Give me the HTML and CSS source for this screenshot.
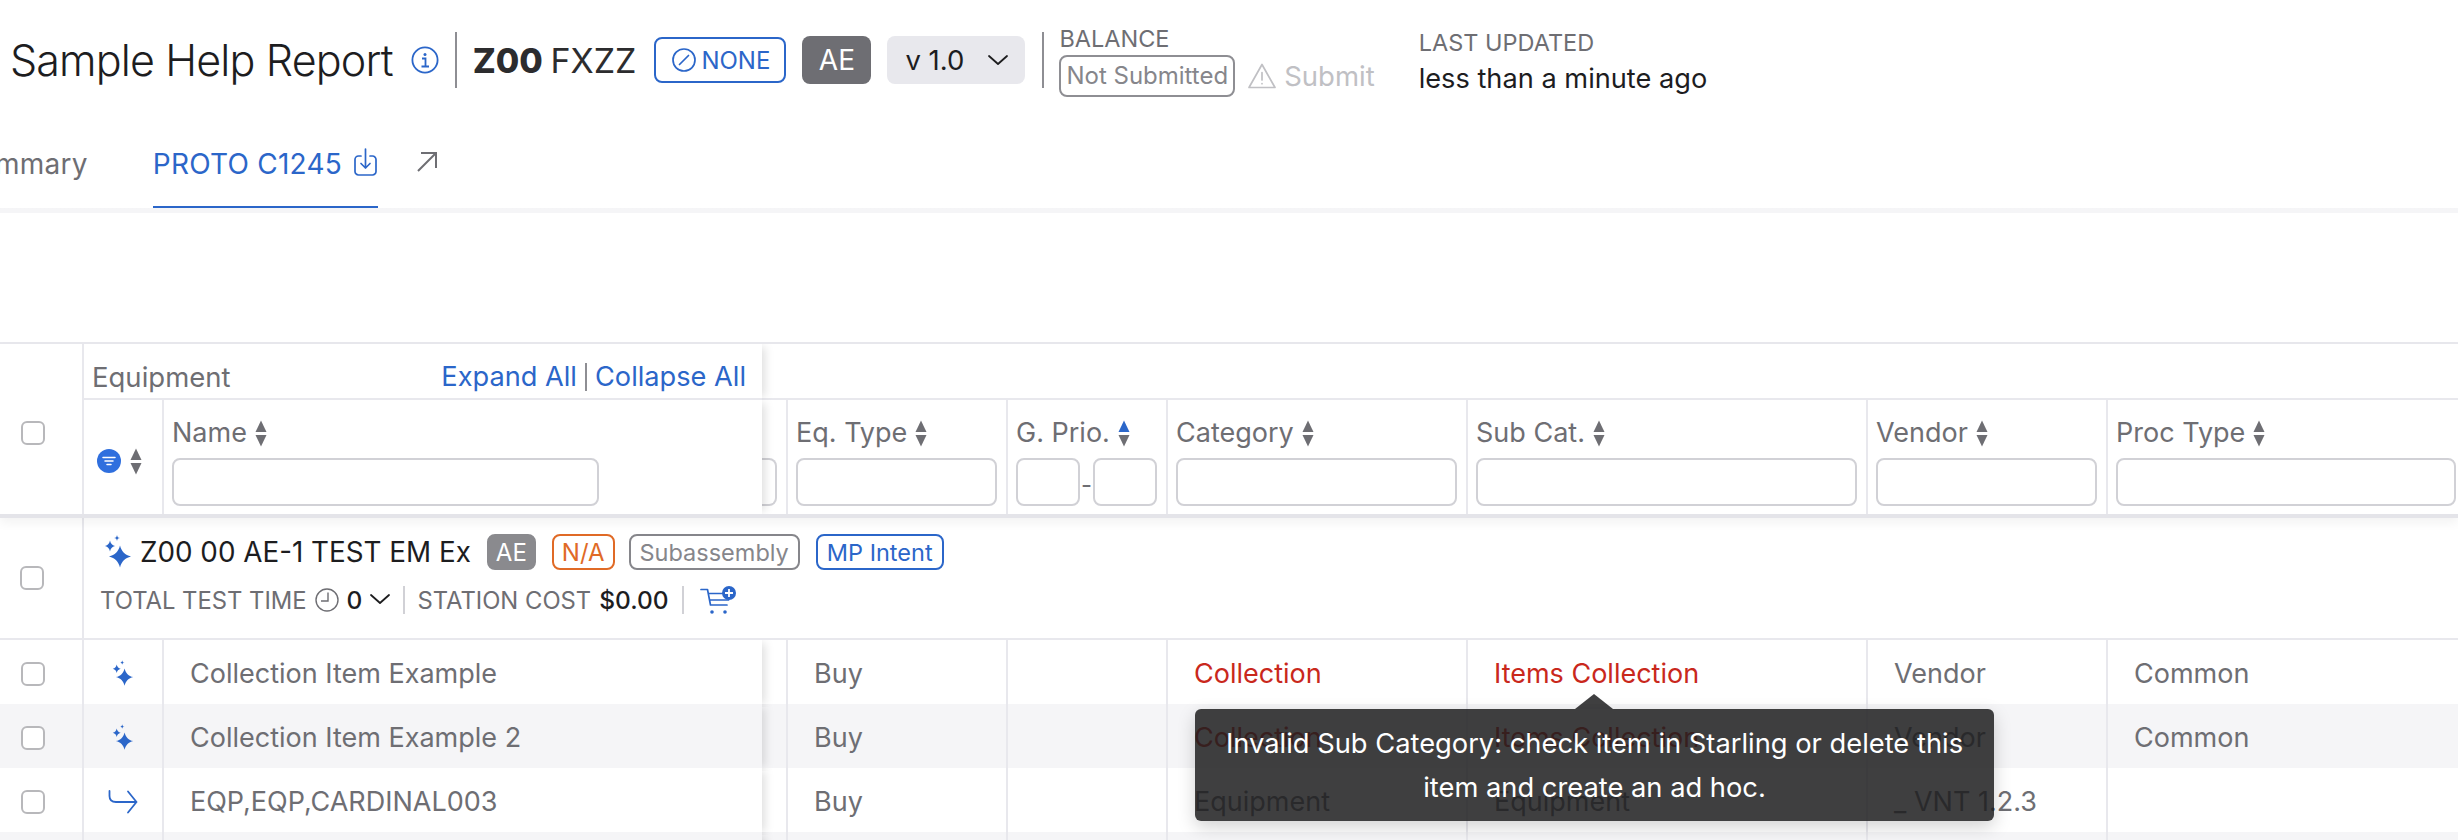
FILE: index.html
```html
<!DOCTYPE html>
<html lang="en">
<head>
<meta charset="utf-8">
<title>Sample Help Report</title>
<link rel="stylesheet" href="styles.css">
</head>
<body>
<svg class="defs" width="0" height="0" aria-hidden="true">
  <symbol id="i-spark" viewBox="0 0 28 34">
    <path fill="currentColor" d="M16 10.500C17.600 16.500 21 20 27 21.500C21 23 17.600 26.500 16 32.500C14.400 26.500 11 23 5 21.500C11 20 14.400 16.500 16 10.500Z"/>
    <path fill="currentColor" d="M6 5.500C6.600 8.500 8 10 11 11C8 12 6.600 13.500 6 16.500C5.400 13.500 4 12 1 11C4 10 5.400 8.500 6 5.500Z"/>
    <path fill="currentColor" d="M13 0C13.300 2 14 2.800 16 3C14 3.200 13.300 4 13 6C12.700 4 12 3.200 10 3C12 2.800 12.700 2 13 0Z"/>
  </symbol>
  <symbol id="i-sort" viewBox="0 0 12 27">
    <path fill="currentColor" d="M6 0.500L11.500 12H0.500Z"/>
    <path fill="currentColor" d="M0.500 15H11.500L6 26.500Z"/>
  </symbol>
  <symbol id="i-chev" viewBox="0 0 20 10">
    <path fill="none" stroke="currentColor" stroke-width="1.800" stroke-linecap="round" stroke-linejoin="round" d="M1 1L10 9L19 1"/>
  </symbol>
</svg>

<div class="page">
  <header class="topbar">
    <h1 class="title">Sample Help Report</h1>
    <svg class="icon-info" viewBox="0 0 28 28"><circle cx="14" cy="14" r="12.600" fill="none" stroke="currentColor" stroke-width="1.800"/><circle cx="14" cy="8.500" r="1.500" fill="currentColor"/><path fill="none" stroke="currentColor" stroke-width="1.800" d="M11 12.500H14.500V20.500M10.500 20.500H18"/></svg>
    <span class="vrule"></span>
    <span class="code"><b>Z00</b> FXZZ</span>
    <span class="badge-none">
      <svg class="icon-ban" viewBox="0 0 24 24"><circle cx="12" cy="12" r="11" fill="none" stroke="currentColor" stroke-width="1.700"/><path stroke="currentColor" stroke-width="1.700" stroke-linecap="round" d="M7.500 16.500L16.500 7.500"/></svg>
      NONE
    </span>
    <span class="badge-ae">AE</span>
    <span class="version">v 1.0<svg class="icon-chev"><use href="#i-chev"/></svg></span>
    <span class="vrule vrule-b"></span>
    <div class="balance">
      <span class="meta-label balance-label">BALANCE</span>
      <div class="balance-row">
        <span class="badge-status">Not Submitted</span>
        <span class="submit">
          <svg class="icon-warn" viewBox="0 0 28 26"><path fill="none" stroke="currentColor" stroke-width="1.700" stroke-linejoin="round" d="M14 1.500L27 24.500H1Z"/><path stroke="currentColor" stroke-width="1.700" stroke-linecap="round" d="M14 9.500V17M14 20.500V20.700"/></svg>
          Submit
        </span>
      </div>
    </div>
    <div class="updated">
      <span class="meta-label">LAST UPDATED</span>
      <span class="updated-value">less than a minute ago</span>
    </div>
  </header>

  <nav class="tabs">
    <span class="tab tab-clipped">Summary</span>
    <span class="tab tab-active">PROTO C1245
      <svg class="icon-export" viewBox="0 0 23 28"><path fill="none" stroke="currentColor" stroke-width="1.700" stroke-linecap="round" stroke-linejoin="round" d="M7 8H4.500A3.500 3.500 0 0 0 1 11.500V23.500A3.500 3.500 0 0 0 4.500 27H18.500A3.500 3.500 0 0 0 22 23.500V11.500A3.500 3.500 0 0 0 18.500 8H16M11.500 1V20M7 15.500L11.500 20L16 15.500"/></svg>
    </span>
    <svg class="icon-open" viewBox="0 0 20 20"><path fill="none" stroke="currentColor" stroke-width="2" d="M1 19L19 1M4 1H19V16"/></svg>
  </nav>

  <div class="spacer"></div>

  <section class="table">
    <div class="thead">
      <div class="th-check"><input class="check" type="checkbox"></div>
      <div class="th-band edge">
        <span class="band-label">Equipment</span>
        <span class="band-links"><a class="link">Expand All</a><span class="link-rule"></span><a class="link">Collapse All</a></span>
      </div>
      <div class="th-band-rest"></div>
      <div class="th th-icon">
        <svg class="icon-filter" viewBox="0 0 24 24"><circle cx="12" cy="12" r="12" fill="currentColor"/><path stroke="#fff" stroke-width="1.500" stroke-linecap="round" d="M6 8.500H18M8 12H16M10 15.500H14"/></svg>
        <svg class="icon-sort"><use href="#i-sort"/></svg>
      </div>
      <div class="th th-name edge">
        <span class="th-label">Name<svg class="icon-sort"><use href="#i-sort"/></svg></span>
        <input class="filter filter-name" type="text">
      </div>
      <div class="th-gap"><input class="filter filter-remnant" type="text"></div>
      <div class="th">
        <span class="th-label">Eq. Type<svg class="icon-sort"><use href="#i-sort"/></svg></span>
        <input class="filter" type="text">
      </div>
      <div class="th">
        <span class="th-label">G. Prio.<svg class="icon-sort icon-sort-asc" viewBox="0 0 12 27"><path class="sort-up" d="M6 0.500L11.500 12H0.500Z"/><path class="sort-down" d="M0.500 15H11.500L6 26.500Z"/></svg></span>
        <span class="range"><input class="filter" type="text"><span class="range-dash">-</span><input class="filter" type="text"></span>
      </div>
      <div class="th">
        <span class="th-label">Category<svg class="icon-sort"><use href="#i-sort"/></svg></span>
        <input class="filter" type="text">
      </div>
      <div class="th">
        <span class="th-label">Sub Cat.<svg class="icon-sort"><use href="#i-sort"/></svg></span>
        <input class="filter" type="text">
      </div>
      <div class="th">
        <span class="th-label">Vendor<svg class="icon-sort"><use href="#i-sort"/></svg></span>
        <input class="filter" type="text">
      </div>
      <div class="th th-last">
        <span class="th-label">Proc Type<svg class="icon-sort"><use href="#i-sort"/></svg></span>
        <input class="filter" type="text">
      </div>
    </div>

    <div class="group">
      <div class="group-check"><input class="check" type="checkbox"></div>
      <div class="group-body">
        <div class="group-title">
          <svg class="icon-spark-lg"><use href="#i-spark"/></svg>
          <span class="group-name">Z00 00 AE-1 TEST EM Ex</span>
          <span class="tag tag-ae">AE</span>
          <span class="tag tag-na">N/A</span>
          <span class="tag tag-sub">Subassembly</span>
          <span class="tag tag-mp">MP Intent</span>
        </div>
        <div class="group-meta">
          <span class="meta-key">TOTAL TEST TIME</span>
          <svg class="icon-clock" viewBox="0 0 24 24"><circle cx="12" cy="12" r="11" fill="none" stroke="currentColor" stroke-width="1.400"/><path fill="none" stroke="currentColor" stroke-width="1.400" d="M13 4.500V13H6"/></svg>
          <span class="meta-val">0</span>
          <svg class="icon-chev icon-chev-sm"><use href="#i-chev"/></svg>
          <span class="meta-rule"></span>
          <span class="meta-key">STATION COST</span>
          <span class="meta-val meta-cost">$0.00</span>
          <span class="meta-rule"></span>
          <svg class="icon-cart" viewBox="0 0 36 28"><path fill="none" stroke="currentColor" stroke-width="1.700" stroke-linecap="round" stroke-linejoin="round" d="M1 3.500H7.500L10.500 19H27M8.500 7.500H23M9.500 14H28.500"/><circle cx="12" cy="26" r="1.800" fill="currentColor"/><circle cx="25" cy="26" r="1.800" fill="currentColor"/><circle cx="29" cy="7" r="7" fill="currentColor"/><path stroke="#fff" stroke-width="1.800" d="M29 3V11M25 7H33"/></svg>
        </div>
      </div>
    </div>

    <div class="row">
      <div class="td-check"><input class="check" type="checkbox"></div>
      <div class="td-icon"><svg class="icon-spark"><use href="#i-spark"/></svg></div>
      <div class="td edge">Collection Item Example</div>
      <div class="td-gap"></div>
      <div class="td">Buy</div>
      <div class="td"></div>
      <div class="td td-error">Collection</div>
      <div class="td td-error td-anchor">Items Collection
        <div class="tooltip">Invalid Sub Category: check item in Starling or delete this item and create an ad hoc.</div>
      </div>
      <div class="td">Vendor</div>
      <div class="td">Common</div>
    </div>
    <div class="row row-alt">
      <div class="td-check"><input class="check" type="checkbox"></div>
      <div class="td-icon"><svg class="icon-spark"><use href="#i-spark"/></svg></div>
      <div class="td edge">Collection Item Example 2</div>
      <div class="td-gap"></div>
      <div class="td">Buy</div>
      <div class="td"></div>
      <div class="td td-error">Collection</div>
      <div class="td td-error">Items Collection</div>
      <div class="td">Vendor</div>
      <div class="td">Common</div>
    </div>
    <div class="row">
      <div class="td-check"><input class="check" type="checkbox"></div>
      <div class="td-icon"><svg class="icon-branch" viewBox="0 0 30 24"><path fill="none" stroke="currentColor" stroke-width="1.800" stroke-linecap="round" stroke-linejoin="round" d="M1.500 1V6Q1.500 12 8 12H28.500M20 1.500L28.500 12L20 22.500"/></svg></div>
      <div class="td edge">EQP,EQP,CARDINAL003</div>
      <div class="td-gap"></div>
      <div class="td">Buy</div>
      <div class="td"></div>
      <div class="td">Equipment</div>
      <div class="td">Equipment</div>
      <div class="td">_ VNT 1.2.3</div>
      <div class="td"></div>
    </div>
    <div class="row row-alt">
      <div class="td-check"></div>
      <div class="td-icon"></div>
      <div class="td edge"></div>
      <div class="td-gap"></div>
      <div class="td"></div>
      <div class="td"></div>
      <div class="td"></div>
      <div class="td"></div>
      <div class="td"></div>
      <div class="td"></div>
    </div>
  </section>
</div>
</body>
</html>
```
FILE: styles.css
```css
:root {
  --blue: #2b66c9;
  --gray: #6e6e73;
  --ink: #1d1d1f;
  --line: #e8e8ed;
  --cols: 82px 80px 600px 24px 220px 160px 300px 400px 240px 352px;
}

html, body {
  margin: 0;
  height: 840px;
  overflow: hidden;
  background: #fff;
}

body {
  font-family: Inter, "Liberation Sans", sans-serif;
  font-size: 27px;
  color: var(--ink);
}

.defs { position: absolute; }

.page { width: 2458px; }

/* top bar */
.topbar {
  display: flex;
  align-items: center;
  height: 120px;
  padding-left: 10px;
  box-sizing: border-box;
}

.title {
  margin: 0;
  font-size: 43px;
  font-weight: 300;
  letter-spacing: -0.85px;
  color: #1d1d1f;
  white-space: nowrap;
}

.icon-info {
  width: 28px;
  height: 28px;
  margin-left: 18px;
  color: var(--blue);
}

.vrule {
  width: 2px;
  height: 56px;
  margin-left: 16px;
  background: #8e8e93;
}

.code {
  margin-left: 16px;
  font-size: 34px;
  font-weight: 400;
  word-spacing: -2px;
  color: #2c2c2e;
  white-space: nowrap;
}

.code b { font-weight: 800; }

.badge-none {
  display: flex;
  align-items: center;
  gap: 5px;
  box-sizing: border-box;
  width: 132px;
  height: 46px;
  margin-left: 18px;
  padding-left: 16px;
  border: 2px solid var(--blue);
  border-radius: 8px;
  color: var(--blue);
  font-size: 24px;
}

.icon-ban { width: 24px; height: 24px; flex: none; }

.badge-ae {
  display: flex;
  align-items: center;
  justify-content: center;
  width: 69px;
  height: 48px;
  margin-left: 16px;
  border-radius: 8px;
  background: var(--gray);
  color: #fff;
  font-size: 28px;
}

.version {
  display: flex;
  align-items: center;
  justify-content: space-between;
  box-sizing: border-box;
  width: 138px;
  height: 48px;
  margin-left: 16px;
  padding: 0 17px 0 18px;
  border-radius: 8px;
  background: #e8e8ed;
  font-size: 27.500px;
}

.icon-chev { width: 20px; height: 10px; color: #1d1d1f; }

.vrule-b { margin-left: 17px; }

.balance {
  display: flex;
  flex-direction: column;
  margin-left: 15px;
  margin-top: 5px;
}

.meta-label {
  font-size: 23.500px;
  line-height: 26px;
  color: var(--gray);
  white-space: nowrap;
}

.balance-label {
  line-height: 20px;
  margin-bottom: 6px;
}

.balance-row {
  display: flex;
  align-items: center;
  margin-top: 0;
}

.badge-status {
  box-sizing: border-box;
  height: 42px;
  padding: 0 5px;
  border: 2px solid #8e8e93;
  border-radius: 8px;
  color: #86868b;
  font-size: 24px;
  line-height: 38px;
  white-space: nowrap;
}

.submit {
  display: flex;
  align-items: center;
  gap: 8px;
  margin-left: 13px;
  color: #c0c0c4;
  font-size: 27.500px;
}

.icon-warn { width: 28px; height: 26px; }

.updated {
  display: flex;
  flex-direction: column;
  gap: 7px;
  margin-left: 44px;
  margin-top: 5px;
}

.updated-value {
  font-size: 27.200px;
  line-height: 32px;
  color: #1d1d1f;
  white-space: nowrap;
}

/* tabs */
.tabs {
  display: flex;
  align-items: flex-start;
  height: 88px;
  border-bottom: 5px solid #eeeef1;
  border-image: linear-gradient(#e8e8ed, #f5f5f7) 1;
}

.tab {
  box-sizing: border-box;
  display: flex;
  align-items: flex-start;
  height: 88px;
  padding-top: 28px;
  font-size: 28px;
  letter-spacing: 0.25px;
  line-height: 32px;
  color: var(--gray);
  white-space: nowrap;
}

.tab-clipped {
  margin-left: -40px;
  margin-right: 65px;
}

.tab-active {
  gap: 12px;
  padding-right: 1px;
  color: var(--blue);
  border-bottom: 2px solid var(--blue);
}

.icon-export {
  width: 23px;
  height: 28px;
  margin-top: 0;
}

.icon-open {
  width: 20px;
  height: 20px;
  margin: 32px 0 0 39px;
  color: var(--gray);
}

.spacer { height: 129px; }

/* table */
.table { border-top: 2px solid var(--line); }

.thead {
  display: grid;
  grid-template-columns: var(--cols);
  grid-template-rows: 56px 114px;
  border-bottom: 4px solid #e4e4e9;
  box-shadow: 0 5px 10px rgba(0, 0, 0, 0.05);
  position: relative;
}

.th-check {
  grid-row: 1 / span 2;
  display: flex;
  align-items: center;
  padding: 7px 0 0 21px;
  background: #fff;
}

.check {
  appearance: none;
  box-sizing: border-box;
  width: 24px;
  height: 24px;
  margin: 0;
  border: 2px solid #b8b8bb;
  border-radius: 6px;
  background: #fff;
}

.th-band {
  grid-column: 2 / span 2;
  display: flex;
  justify-content: space-between;
  align-items: flex-end;
  box-sizing: border-box;
  padding: 0 16px 5px 8px;
  border-left: 2px solid var(--line);
  border-bottom: 2px solid var(--line);
  background: #fff;
}

.th-band-rest {
  grid-column: 4 / span 7;
  border-bottom: 2px solid var(--line);
}

.edge {
  position: relative;
  z-index: 1;
  box-shadow: 6px 0 9px -3px rgba(0, 0, 0, 0.13);
  clip-path: inset(0 -24px 0 0);
}

.band-label {
  line-height: 32px;
  color: var(--gray);
  font-size: 27.500px;
}

.band-links {
  display: flex;
  align-items: center;
  gap: 8px;
}

.link {
  color: var(--blue);
  font-size: 27.200px;
  line-height: 32px;
}

.link-rule {
  width: 2px;
  height: 28px;
  background: #8e8e93;
}

.th {
  display: flex;
  flex-direction: column;
  gap: 11px;
  justify-content: flex-end;
  box-sizing: border-box;
  padding: 0 9px 8px 8px;
  border-left: 2px solid var(--line);
  background: #fff;
}

.th-last { padding-right: 2px; }

.th-name { padding-right: 163px; }

.th-icon {
  flex-direction: row;
  align-items: center;
  justify-content: flex-start;
  gap: 9px;
  padding: 8px 0 0 13px;
}

.th-gap {
  display: flex;
  align-items: flex-end;
  padding-bottom: 8px;
}

.th-label {
  display: flex;
  align-items: center;
  gap: 8px;
  line-height: 28px;
  color: var(--gray);
  font-size: 27px;
  white-space: nowrap;
}

.filter {
  box-sizing: border-box;
  width: 100%;
  height: 48px;
  margin: 0;
  padding: 0;
  border: 2px solid #d1d1d6;
  border-radius: 8px;
  background: #fff;
}

.filter-remnant {
  width: 15px;
  border-left: none;
  border-radius: 0 8px 8px 0;
}

.range {
  display: flex;
  align-items: center;
  gap: 1px;
  height: 48px;
}

.range .filter { width: 64px; flex: none; }

.range-dash {
  flex: 1;
  text-align: center;
  color: var(--gray);
  font-size: 24px;
  line-height: 24px;
  padding-top: 5px;
}

.icon-filter { width: 24px; height: 24px; color: #2f6fde; flex: none; }

.icon-sort {
  width: 12px;
  height: 27px;
  color: var(--gray);
  flex: none;
}

.sort-up { fill: var(--blue); }
.sort-down { fill: var(--gray); }

/* group row */
.group {
  display: flex;
  height: 120px;
  border-bottom: 2px solid var(--line);
}

.group-check {
  display: flex;
  align-items: center;
  width: 82px;
  box-sizing: border-box;
  padding-left: 20px;
  flex: none;
}

.group-body {
  display: flex;
  flex-direction: column;
  gap: 16px;
  padding: 16px 0 0 16px;
  border-left: 2px solid var(--line);
  flex: 1;
}

.group-title {
  display: flex;
  align-items: center;
  height: 36px;
  padding-left: 4px;
}

.icon-spark-lg {
  width: 28px;
  height: 34px;
  color: var(--blue);
  flex: none;
}

.group-name {
  margin-left: 8px;
  font-size: 27.800px;
  color: var(--ink);
  white-space: nowrap;
}

.tag {
  display: flex;
  align-items: center;
  box-sizing: border-box;
  height: 36px;
  padding: 0 9px;
  margin-left: 16px;
  border: 2px solid;
  border-radius: 8px;
  font-size: 23.500px;
  white-space: nowrap;
}

.tag-ae {
  background: #8a8a8e;
  border-color: #8a8a8e;
  color: #fff;
  font-size: 24px;
  padding: 0 7px;
}

.tag-na { color: #e06a26; border-color: #e06a26; font-size: 24px; padding: 0 8px; }
.tag-sub { color: #86868b; border-color: #86868b; margin-left: 14px; }
.tag-mp { color: var(--blue); border-color: var(--blue); }

.group-meta {
  display: flex;
  align-items: center;
  height: 28px;
}

.meta-key {
  font-size: 23.800px;
  color: var(--gray);
  white-space: nowrap;
}

.icon-clock {
  width: 24px;
  height: 24px;
  margin-left: 8px;
  color: var(--gray);
  flex: none;
}

.meta-val {
  margin-left: 8px;
  font-size: 24.500px;
  font-weight: 500;
  color: var(--ink);
  white-space: nowrap;
}

.icon-chev-sm { margin-left: 8px; margin-top: -2px; flex: none; }

.meta-rule {
  width: 2px;
  height: 28px;
  margin: 0 12px 0 13px;
  background: #d1d1d6;
  flex: none;
}

.icon-cart {
  width: 36px;
  height: 28px;
  margin-left: 4px;
  color: var(--blue);
  flex: none;
}

/* rows */
.row {
  display: grid;
  grid-template-columns: var(--cols);
  height: 64px;
}

.row-alt { background: #f5f5f7; }

.td-check {
  display: flex;
  align-items: center;
  padding-left: 21px;
}

.td-icon {
  display: flex;
  align-items: center;
  justify-content: center;
  border-left: 2px solid var(--line);
}

.td {
  box-sizing: border-box;
  padding-left: 26px;
  border-left: 2px solid var(--line);
  color: var(--gray);
  font-size: 27px;
  line-height: 67px;
  white-space: nowrap;
}

.row .edge { background: #fff; }
.row-alt .edge { background: #f5f5f7; }

.td-error { color: #c9281c; }

.td-anchor {
  position: relative;
  z-index: 5;
}

.icon-spark { width: 22px; height: 27px; color: var(--blue); }
.icon-branch { width: 30px; height: 24px; color: var(--blue); }

.tooltip {
  position: absolute;
  left: -273px;
  top: 69px;
  box-sizing: border-box;
  width: 799px;
  height: 112px;
  padding: 2px 24px 0;
  border-radius: 6px;
  background: rgba(29, 29, 31, 0.85);
  box-shadow: 0 6px 18px rgba(0, 0, 0, 0.18);
  color: #fff;
  font-size: 27.300px;
  line-height: 44px;
  text-align: center;
  white-space: normal;
  display: flex;
  align-items: center;
}

.tooltip::before {
  content: "";
  position: absolute;
  left: 380px;
  top: -15px;
  border-left: 19px solid transparent;
  border-right: 19px solid transparent;
  border-bottom: 15px solid rgba(29, 29, 31, 0.85);
}
```
